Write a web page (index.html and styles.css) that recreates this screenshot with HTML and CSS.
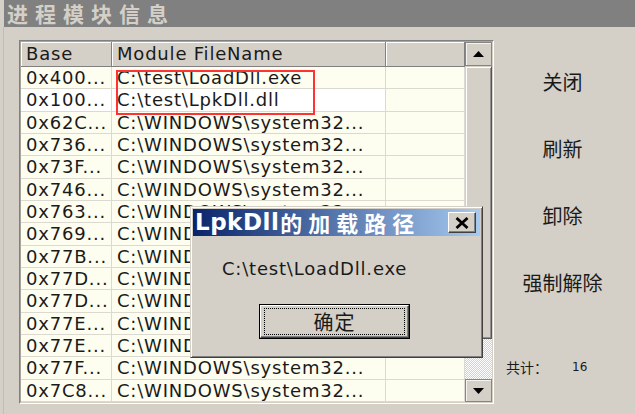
FILE: index.html
```html
<!DOCTYPE html>
<html>
<head>
<meta charset="utf-8">
<link rel="stylesheet" href="styles.css">
</head>
<body>
<div class="app">
  <div class="caption">进程模块信息</div>
  <div class="main">
    <div class="listview">
      <div class="lv-inner">
        <div class="grid">
          <div class="hd">Base</div><div class="hd">Module FileName</div><div class="hd"></div>
          <div class="c">0x400...</div><div class="c">C:\test\LoadDll.exe</div><div class="c"></div>
          <div class="c sel">0x100...</div><div class="c sel">C:\test\LpkDll.dll</div><div class="c"></div>
          <div class="c">0x62C...</div><div class="c">C:\WINDOWS\system32...</div><div class="c"></div>
          <div class="c">0x736...</div><div class="c">C:\WINDOWS\system32...</div><div class="c"></div>
          <div class="c">0x73F...</div><div class="c">C:\WINDOWS\system32...</div><div class="c"></div>
          <div class="c">0x746...</div><div class="c">C:\WINDOWS\system32...</div><div class="c"></div>
          <div class="c">0x763...</div><div class="c">C:\WINDOWS\system32...</div><div class="c"></div>
          <div class="c">0x769...</div><div class="c">C:\WINDOWS\system32...</div><div class="c"></div>
          <div class="c">0x77B...</div><div class="c">C:\WINDOWS\system32...</div><div class="c"></div>
          <div class="c">0x77D...</div><div class="c">C:\WINDOWS\system32...</div><div class="c"></div>
          <div class="c">0x77D...</div><div class="c">C:\WINDOWS\system32...</div><div class="c"></div>
          <div class="c">0x77E...</div><div class="c">C:\WINDOWS\system32...</div><div class="c"></div>
          <div class="c">0x77E...</div><div class="c">C:\WINDOWS\system32...</div><div class="c"></div>
          <div class="c">0x77F...</div><div class="c">C:\WINDOWS\system32...</div><div class="c"></div>
          <div class="c">0x7C8...</div><div class="c">C:\WINDOWS\system32...</div><div class="c"></div>
        </div>
        <div class="vscroll">
          <div class="sb-btn up"><svg width="11" height="6" viewBox="0 0 11 6"><polygon points="0,6 11,6 5.5,0" fill="#000"/></svg></div>
          <div class="sb-thumb"></div>
          <div class="sb-track"></div>
          <div class="sb-btn down"><svg width="11" height="6" viewBox="0 0 11 6"><polygon points="0,0 11,0 5.5,6" fill="#000"/></svg></div>
        </div>
      </div>
      <div class="mark"></div>
    </div>
    <div class="side">
      <div class="btn">关闭</div>
      <div class="btn">刷新</div>
      <div class="btn">卸除</div>
      <div class="btn">强制解除</div>
      <div class="count"><span class="count-label">共计：</span><span class="num">16</span></div>
    </div>
  </div>
  <div class="dialog">
    <div class="dlg-title">
      <span class="lat">LpkDll</span><span class="cjk">的加载路径</span>
      <div class="close"><svg width="14" height="12" viewBox="0 0 14 12"><path d="M1.5 1 L12.5 11 M12.5 1 L1.5 11" stroke="#000" stroke-width="2.8" fill="none"/></svg></div>
    </div>
    <div class="dlg-body">
      <div class="path">C:\test\LoadDll.exe</div>
      <div class="ok"><div class="ok-in"><div class="focus">确定</div></div></div>
    </div>
  </div>
</div>
</body>
</html>
```
FILE: styles.css
```css
* { box-sizing: border-box; }
body {
  margin: 0;
  background: #d4d0c8;
  font-family: "DejaVu Sans", sans-serif;
  color: #1a1a1a;
}
.app {
  position: relative;
  width: 635px;
  height: 414px;
  overflow: hidden;
  background: #d4d0c8;
}
.caption {
  margin-left: 4px;
  height: 27px;
  background: #808080;
  color: #d4d0c8;
  font: bold 21px/27px "Noto Sans CJK SC", sans-serif;
  letter-spacing: 7px;
  padding-left: 3px;
  white-space: nowrap;
}
.main {
  display: flex;
  margin-left: 3px;
  border-left: 1px solid #c2beb6;
  padding: 13px 0 0 15px;
  height: 387px;
}
.listview {
  position: relative;
  width: 475px;
  height: 364px;
  border: 1px solid;
  border-color: #808080 #ffffff #ffffff #808080;
  flex: none;
}
.lv-inner {
  display: flex;
  height: 100%;
  border: 1px solid;
  border-color: #a8a59e #d4d0c8 #d4d0c8 #a8a59e;
}
.grid {
  width: 444px;
  height: 100%;
  display: grid;
  grid-template-columns: 91px 274px 79px;
  grid-template-rows: 25px repeat(15, 1fr);
  background: #fefef0;
  font-size: 18px;
  letter-spacing: 0.8px;
}
.hd {
  background: #d4d0c8;
  border-right: 1px solid #808080;
  border-bottom: 1px solid #808080;
  box-shadow: inset 1px 1px #ffffff;
  padding-left: 5px;
  line-height: 24px;
  white-space: nowrap;
  overflow: hidden;
}
.c {
  border-right: 1px solid #dcd9d0;
  border-bottom: 1px solid #dcd9d0;
  padding: 1px 0 0 5px;
  line-height: 20px;
  white-space: nowrap;
  overflow: hidden;
}
.c.sel { background: #ffffff; }
.vscroll {
  width: 27px;
  display: flex;
  flex-direction: column;
}
.sb-btn {
  display: flex;
  align-items: center;
  justify-content: center;
  background: #d4d0c8;
  border: 1px solid #888680;
  box-shadow: inset 1px 1px #f4f3ef;
}
.sb-btn.up { height: 24px; }
.sb-btn.down { height: 23px; }
.sb-thumb {
  height: 273px;
  background: #d4d0c8;
  border: 1px solid;
  border-color: #d4d0c8 #555 #555 #d4d0c8;
  box-shadow: inset 1px 1px #ffffff, inset -1px -1px #909090;
}
.sb-track {
  flex: 1;
  background: repeating-conic-gradient(#d4d0c8 0 25%, #ffffff 0 50%) 0 0 / 2px 2px;
}
.mark {
  position: absolute;
  left: 96px;
  top: 29px;
  width: 199px;
  height: 45px;
  border: 2px solid #f33;
}
.side {
  flex: 1;
  height: 364px;
  display: flex;
  flex-direction: column;
  align-items: center;
  padding-top: 21px;
  padding-right: 4px;
}
.btn {
  height: 40px;
  width: 110px;
  margin-bottom: 27px;
  display: flex;
  align-items: center;
  justify-content: center;
  font: 20px "Noto Sans CJK SC", sans-serif;
}
.count {
  margin-top: auto;
  margin-bottom: 27px;
  align-self: flex-start;
  padding-left: 12px;
  display: flex;
  align-items: center;
  height: 20px;
}
.count-label {
  font: 14px "Noto Sans CJK SC", sans-serif;
}
.num {
  margin-left: 24px;
  font-size: 12px;
}
.dialog {
  position: absolute;
  left: 190px;
  top: 206px;
  width: 293px;
  height: 152px;
  background: #d4d0c8;
  border: 1px solid;
  border-color: #d4d0c8 #404040 #404040 #d4d0c8;
  box-shadow: inset 1px 1px #ffffff, inset -1px -1px #808080;
  padding: 2px;
  display: flex;
  flex-direction: column;
}
.dlg-title {
  height: 27px;
  flex: none;
  background: linear-gradient(to right, #0a246a, #a6caf0);
  display: flex;
  align-items: center;
  padding-left: 2px;
  color: #fff;
}
.lat {
  font: bold 23px/27px "DejaVu Sans", sans-serif;
  letter-spacing: 0.5px;
}
.cjk {
  font: bold 22px/27px "Noto Sans CJK SC", sans-serif;
  letter-spacing: 6px;
  margin-left: 1px;
}
.close {
  margin-left: auto;
  margin-right: 4px;
  width: 28px;
  height: 21px;
  background: #d4d0c8;
  border: 1px solid;
  border-color: #ffffff #404040 #404040 #ffffff;
  box-shadow: inset -1px -1px #808080;
  display: flex;
  align-items: center;
  justify-content: center;
}
.dlg-body {
  padding: 21px 0 0 29px;
}
.path {
  font-size: 18px;
  letter-spacing: 0.8px;
  line-height: 24px;
}
.ok {
  margin: 23px 0 0 37px;
  width: 151px;
  height: 35px;
  border: 1px solid #000;
}
.ok-in {
  height: 100%;
  border: 1px solid;
  border-color: #ffffff #404040 #404040 #ffffff;
  box-shadow: inset -1px -1px #808080;
  padding: 2px 3px 2px 3px;
}
.focus {
  height: 100%;
  border: 1px dotted #000;
  display: flex;
  align-items: center;
  justify-content: center;
  font: 20px "Noto Sans CJK SC", sans-serif;
  letter-spacing: 1px;
}
```
